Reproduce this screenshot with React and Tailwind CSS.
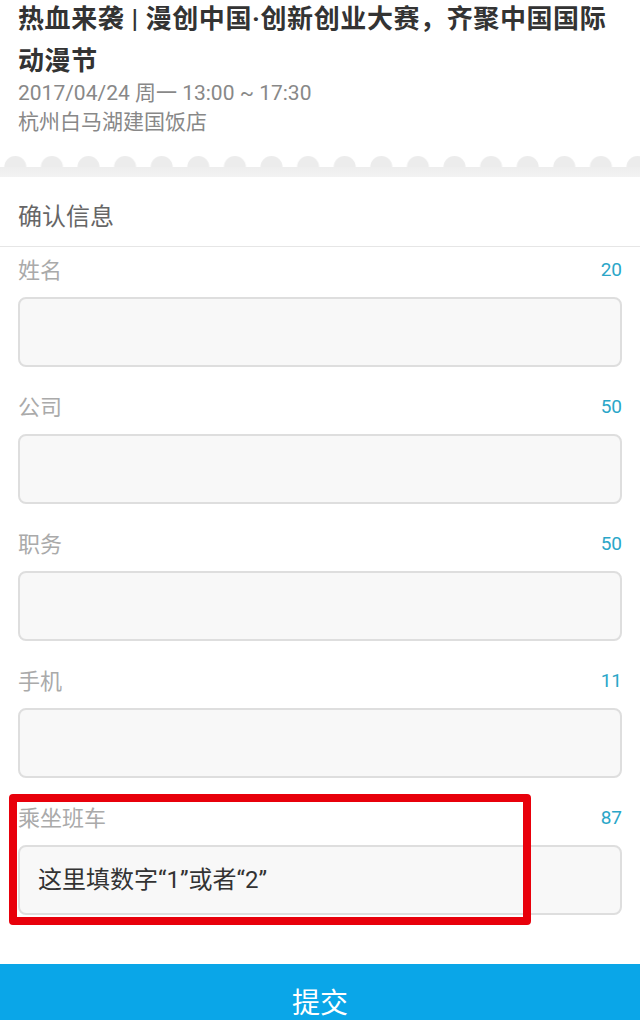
const fields = [
  { label: "姓名", max: 20 },
  { label: "公司", max: 50 },
  { label: "职务", max: 50 },
  { label: "手机", max: 11 },
  { label: "乘坐班车", max: 87, value: "这里填数字“1”或者“2”" },
];

function Scallop() {
  return (
    <svg className="block w-full h-[26px]" viewBox="0 0 640 26" preserveAspectRatio="none">
      <defs>
        <pattern id="bumps" x="-3" y="0" width="36.6" height="26" patternUnits="userSpaceOnUse">
          <circle cx="18.3" cy="16" r="11" fill="#ececec" />
        </pattern>
        <linearGradient id="band" x1="0" y1="0" x2="0" y2="1">
          <stop offset="0" stopColor="#eeeeee" />
          <stop offset="1" stopColor="#f3f3f3" />
        </linearGradient>
      </defs>
      <rect x="0" y="0" width="640" height="26" fill="url(#bumps)" />
      <rect x="0" y="16" width="640" height="10" fill="url(#band)" />
    </svg>
  );
}

export default function App() {
  return (
    <div
      className="relative w-[640px] h-[1020px] overflow-hidden bg-white"
      style={{ fontFamily: "Roboto, 'Noto Sans CJK SC', sans-serif" }}
    >
      <div className="px-[18px] pb-[15px]">
        <h1 className="-mt-[2px] w-[608px] text-[26px] leading-[42px] tracking-[0.6px] font-bold text-[#333]">
          热血来袭 | 漫创中国·创新创业大赛，齐聚中国国际动漫节
        </h1>
        <p className="-mt-[3px] text-[21px] leading-[28px] text-[#888]">2017/04/24 周一 13:00 ~ 17:30</p>
        <p className="mt-[1px] text-[21px] leading-[28px] text-[#888]">杭州白马湖建国饭店</p>
      </div>

      <Scallop />

      <div className="h-[70px] flex items-center pt-[10px] px-[18px] border-b border-[#e6e6e6]">
        <span className="text-[24px] text-[#666]">确认信息</span>
      </div>

      <div className="px-[18px]">
        {fields.map((f) => (
          <div key={f.label} className="mb-[17px]">
            <div className="h-[46px] flex items-center justify-between">
              <span className="text-[22px] text-[#aaa]">{f.label}</span>
              <span className="text-[19px] text-[#2aa6c8]">{f.max}</span>
            </div>
            <div className="mt-[4px] h-[70px] rounded-[8px] border-2 border-[#dedede] bg-[#f8f8f8] flex items-center px-[18px]">
              {f.value && <span className="text-[24px] text-[#333]">{f.value}</span>}
            </div>
          </div>
        ))}
      </div>

      <div className="mt-[49px] h-[80px] bg-[#0aa6e8] flex items-center justify-center">
        <span className="text-[28px] text-white">提交</span>
      </div>

      <div className="absolute left-[9px] top-[794px] w-[522px] h-[131px] border-[8px] border-[#e8000b] rounded-[4px]" />
    </div>
  );
}
